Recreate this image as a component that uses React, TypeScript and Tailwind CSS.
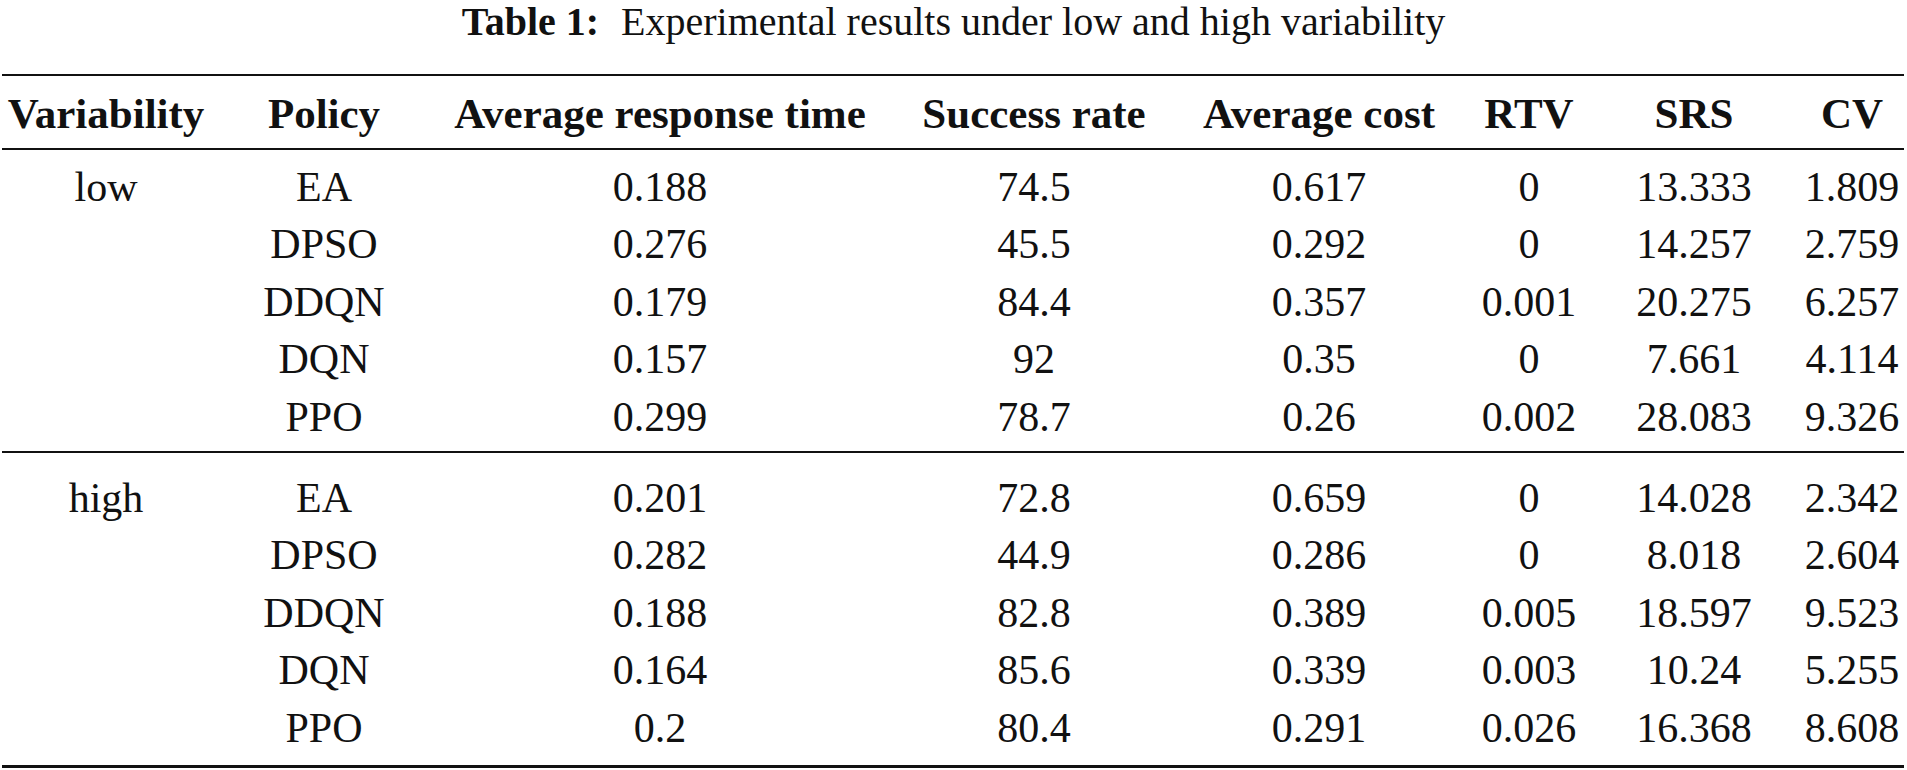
const headers = [
  "Variability",
  "Policy",
  "Average response time",
  "Success rate",
  "Average cost",
  "RTV",
  "SRS",
  "CV",
];

type Row = [string, string, string, string, string, string, string];

const groups: { label: string; rows: Row[] }[] = [
  {
    label: "low",
    rows: [
      ["EA", "0.188", "74.5", "0.617", "0", "13.333", "1.809"],
      ["DPSO", "0.276", "45.5", "0.292", "0", "14.257", "2.759"],
      ["DDQN", "0.179", "84.4", "0.357", "0.001", "20.275", "6.257"],
      ["DQN", "0.157", "92", "0.35", "0", "7.661", "4.114"],
      ["PPO", "0.299", "78.7", "0.26", "0.002", "28.083", "9.326"],
    ],
  },
  {
    label: "high",
    rows: [
      ["EA", "0.201", "72.8", "0.659", "0", "14.028", "2.342"],
      ["DPSO", "0.282", "44.9", "0.286", "0", "8.018", "2.604"],
      ["DDQN", "0.188", "82.8", "0.389", "0.005", "18.597", "9.523"],
      ["DQN", "0.164", "85.6", "0.339", "0.003", "10.24", "5.255"],
      ["PPO", "0.2", "80.4", "0.291", "0.026", "16.368", "8.608"],
    ],
  },
];

// column widths picked so each column centre sits where the reference has it
const cols =
  "grid grid-cols-[208px_228px_444px_304px_266px_154px_176px_120px] text-center leading-[57.6px]";

function Cells({ values, bold = false }: { values: string[]; bold?: boolean }) {
  return (
    <>
      {values.map((v, i) => (
        <div
          key={i}
          className={`whitespace-nowrap ${i === 7 ? "pl-[20px]" : ""} ${bold ? "font-bold text-[43px]" : ""}`}
        >
          {v}
        </div>
      ))}
    </>
  );
}

export default function App() {
  return (
    <div className="w-[1907px] h-[770px] overflow-hidden bg-white text-[#111] font-['Liberation_Serif','Times_New_Roman',serif]">
      <h1 className="text-center text-[40px] leading-[44px] font-normal">
        <span className="font-bold">Table 1:</span>
        <span className="ml-[22px]">Experimental results under low and high variability</span>
      </h1>

      <div className="mt-[30px] ml-[2px] w-[1902px] text-[42px]">
        <div className="h-[2px] bg-[#111]" />
        <div className={`${cols} pt-[9px] pb-[5px]`}>
          <Cells values={headers} bold />
        </div>
        <div className="h-[2px] bg-[#111]" />

        {groups.map((g, gi) => (
          <div key={g.label}>
            <div className={`${cols} ${gi === 0 ? "pt-[9px] pb-[4px]" : "pt-[17px] pb-[7px]"}`}>
              {g.rows.map((r, ri) => (
                <Cells key={ri} values={[ri === 0 ? g.label : "", ...r]} />
              ))}
            </div>
            <div className={gi === 0 ? "h-[2px] bg-[#111]" : "h-[3px] bg-[#111]"} />
          </div>
        ))}
      </div>
    </div>
  );
}
